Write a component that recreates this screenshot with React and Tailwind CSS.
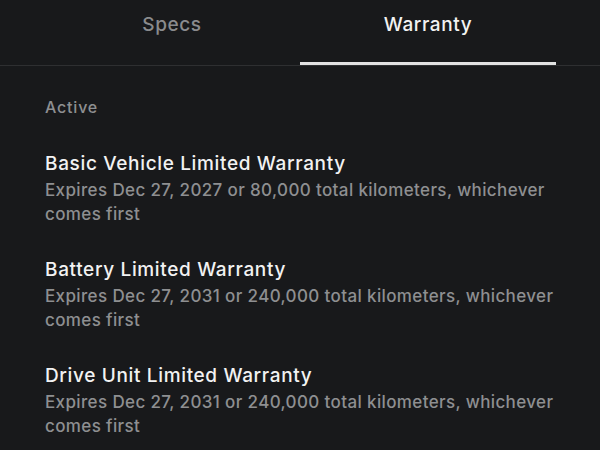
const items = [
  {
    title: "Basic Vehicle Limited Warranty",
    desc: "Expires Dec 27, 2027 or 80,000 total kilometers, whichever comes first",
  },
  {
    title: "Battery Limited Warranty",
    desc: "Expires Dec 27, 2031 or 240,000 total kilometers, whichever comes first",
  },
  {
    title: "Drive Unit Limited Warranty",
    desc: "Expires Dec 27, 2031 or 240,000 total kilometers, whichever comes first",
  },
];

export default function App() {
  return (
    <div
      className="w-[600px] h-[450px] overflow-hidden bg-[#18191b] text-white"
      style={{ fontFamily: "Inter, 'Noto Sans', sans-serif" }}
    >
      <div className="border-b border-[#2e2f31] px-[44px]">
        <div className="flex h-[65px]">
          <div className="w-[256px] flex justify-center pt-[11px] text-[19px] leading-[28px] tracking-[0.6px] font-medium text-[#8a8b8d]">
            Specs
          </div>
          <div className="w-[256px] flex justify-center pt-[11px] text-[19px] leading-[28px] tracking-[0.6px] font-medium text-[#f2f2f2] border-b-[3px] border-[#e2e2e2]">
            Warranty
          </div>
        </div>
      </div>

      <div className="px-[45px] pt-[29px]">
        <div className="text-[16px] leading-[24px] tracking-[0.8px] font-medium text-[#8e8f91]">
          Active
        </div>
        <div className="flex flex-col gap-[30px] mt-[31px] w-[515px]">
          {items.map((item) => (
            <div key={item.title}>
              <div className="text-[19px] leading-[28px] tracking-[0.65px] font-medium text-[#f2f2f2]">
                {item.title}
              </div>
              <div className="text-[17px] leading-[24px] tracking-[0.37px] font-medium text-[#8e8f91]">
                {item.desc}
              </div>
            </div>
          ))}
        </div>
      </div>
    </div>
  );
}
